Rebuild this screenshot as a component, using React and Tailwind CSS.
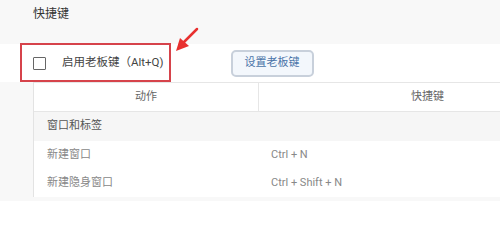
import React from "react";

export default function App() {
  const font = { fontFamily: 'Roboto, "Noto Sans CJK SC", sans-serif' };
  return (
    <div className="relative w-[500px] h-[201px] overflow-hidden bg-[#f8f8f8]" style={font}>
      <div className="h-[44px] pl-[33px] pt-[5px] text-[12px] text-[#333]">快捷键</div>
      <div className="h-[38px] bg-white flex items-center">
        <div className="ml-[33px] w-[13px] h-[13px] border-[1.5px] border-[#666] rounded-[1px]"></div>
        <div className="ml-[16px] text-[11.5px] text-[#444]">启用老板键（Alt+Q)</div>
        <button className="ml-[67px] w-[83px] h-[27px] rounded-[5px] border-2 border-[#c8d0db] bg-[#f3f7fc] text-[11px] text-[#4a74a8]">
          设置老板键
        </button>
      </div>
      <div className="ml-[33px] w-[563px] bg-white border-l border-[#e3e3e3]">
        <div className="flex h-[30px] border-t border-b border-[#e6e6e6] text-[11px] text-[#666]">
          <div className="w-[225px] flex items-center justify-center border-r border-[#e6e6e6]">动作</div>
          <div className="flex-1 flex items-center justify-center">快捷键</div>
        </div>
        <div className="h-[29px] bg-[#f6f6f6] flex items-center pl-[13px] text-[11px] text-[#555]">窗口和标签</div>
        <div className="flex h-[28px] items-center text-[11px] text-[#888]">
          <div className="w-[225px] pl-[13px]">新建窗口</div>
          <div className="pl-[12px]">Ctrl + N</div>
        </div>
        <div className="flex h-[28px] items-center text-[11px] text-[#888]">
          <div className="w-[225px] pl-[13px]">新建隐身窗口</div>
          <div className="pl-[12px]">Ctrl + Shift + N</div>
        </div>
      </div>
      <div className="absolute left-[20px] top-[43px] w-[151px] h-[39px] border-2 border-[#d6434b]"></div>
      <svg className="absolute left-[170px] top-[24px]" width="34" height="32" viewBox="0 0 34 32">
        <path d="M27 5 L13 19" stroke="#e8302f" strokeWidth="2.5" strokeLinecap="round" />
        <polygon points="6,27 10,14 19,22" fill="#e8302f" />
      </svg>
    </div>
  );
}
